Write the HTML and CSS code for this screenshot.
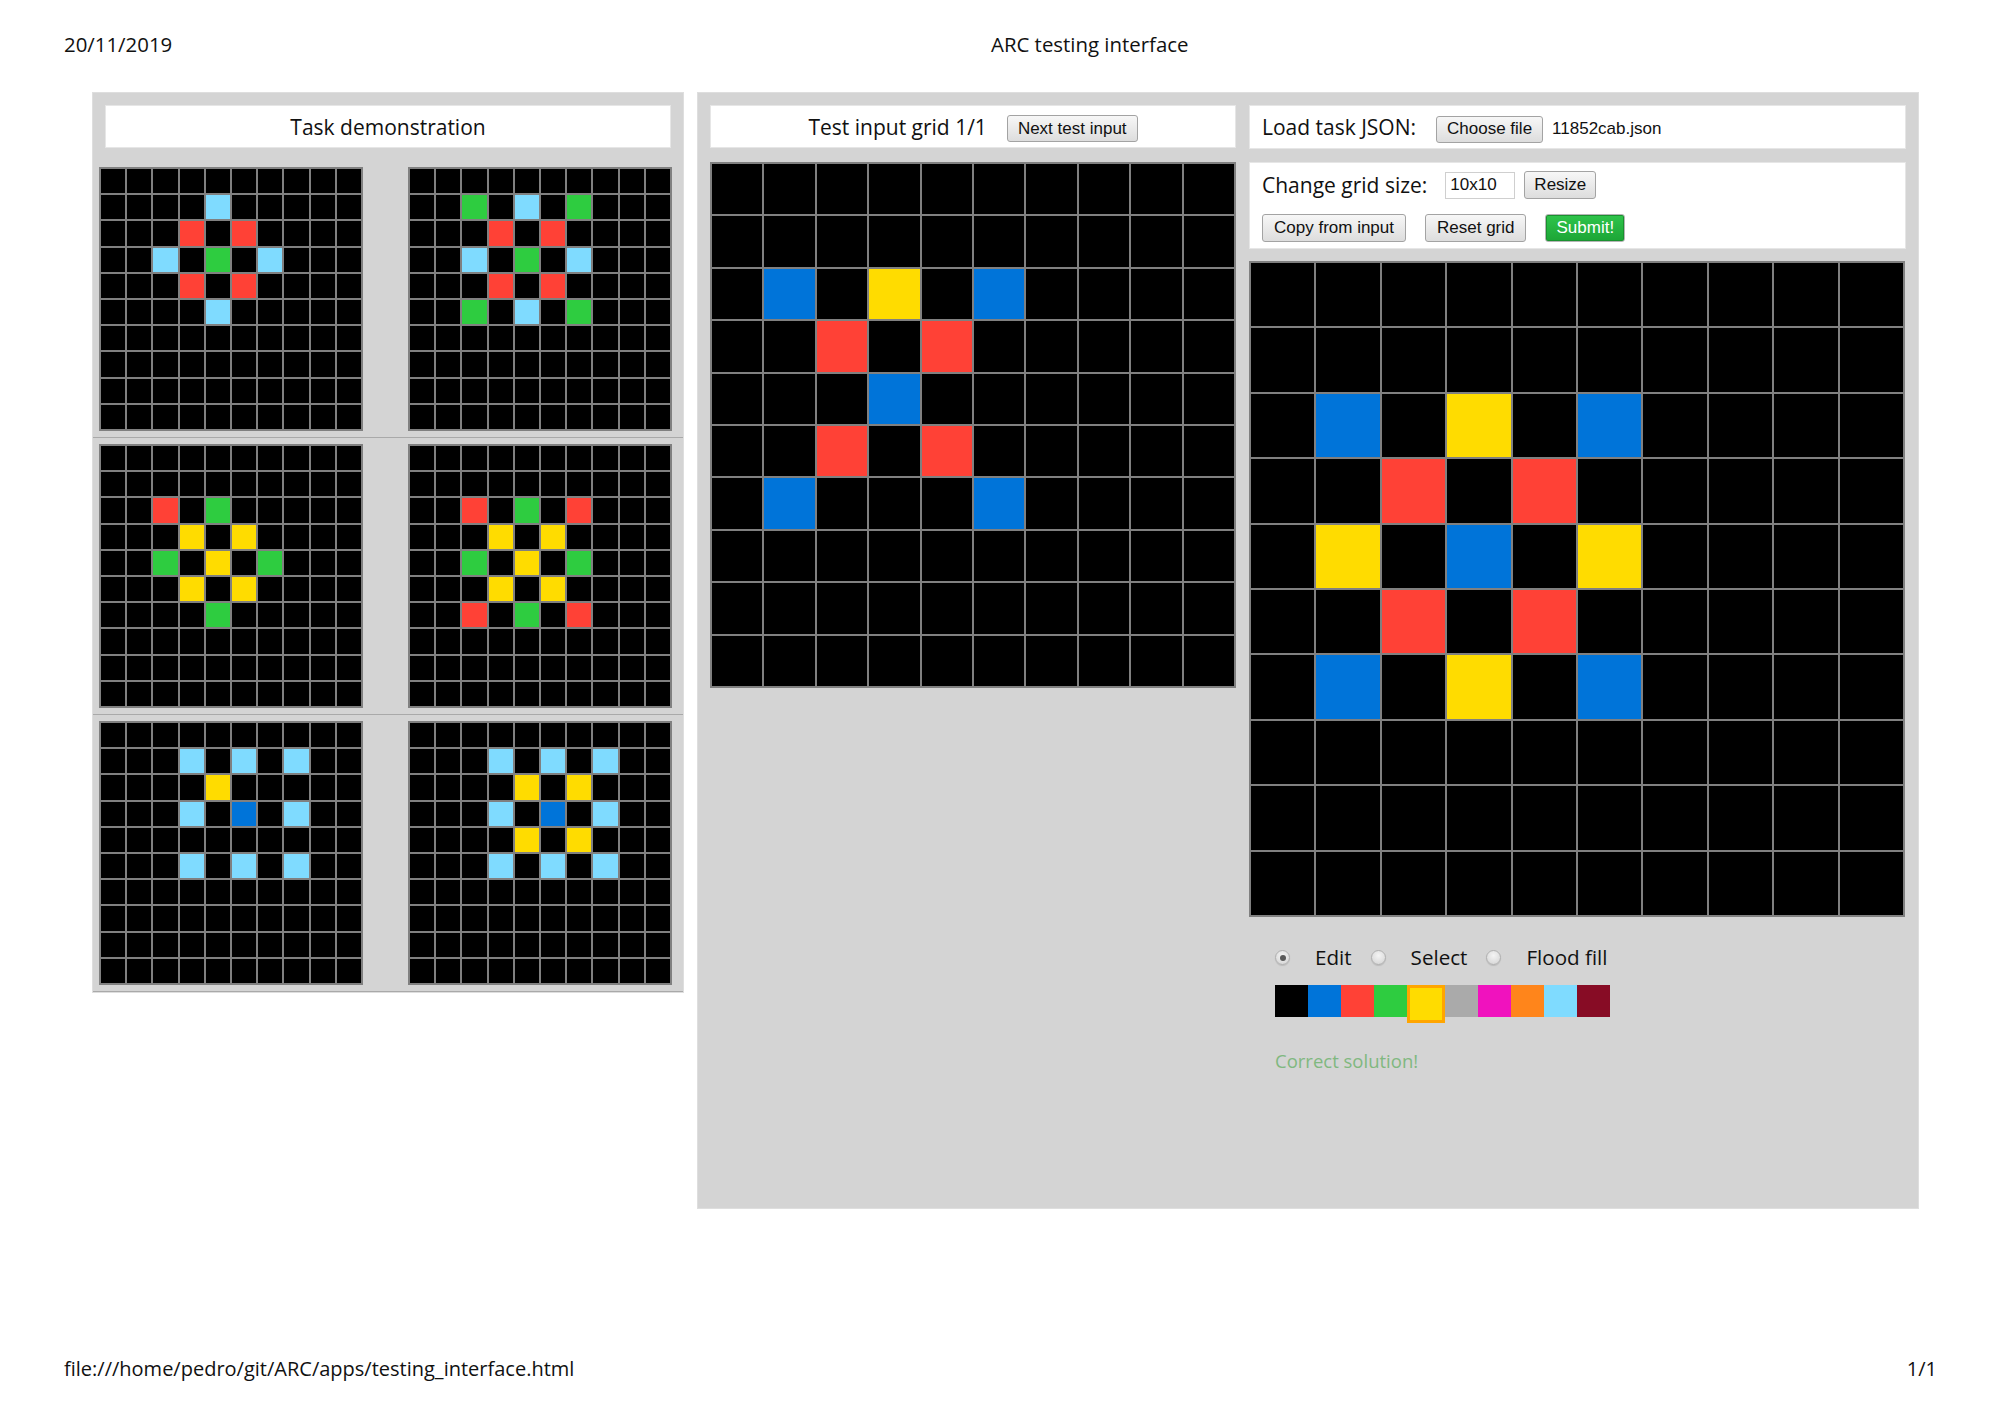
FILE: index.html
```html
<!DOCTYPE html>
<html lang="en">
<head>
<meta charset="utf-8">
<title>ARC testing interface</title>
<link rel="stylesheet" href="styles.css">
</head>
<body>
<div class="page">
  <header class="print-head">
    <span class="date">20/11/2019</span>
    <span class="doc-title">ARC testing interface</span>
  </header>

  <main class="workspace">
    <section class="demo-panel">
      <div class="box demo-title">Task demonstration</div>
      <div class="pair first">
        <div class="grid small" data-grid="p1i"></div>
        <div class="grid small" data-grid="p1o"></div>
      </div>
      <div class="pair">
        <div class="grid small" data-grid="p2i"></div>
        <div class="grid small" data-grid="p2o"></div>
      </div>
      <div class="pair">
        <div class="grid small" data-grid="p3i"></div>
        <div class="grid small" data-grid="p3o"></div>
      </div>
    </section>

    <section class="eval-panel">
      <div class="test-col">
        <div class="box test-head">
          <span class="label">Test input grid 1/1</span>
          <button class="btn next-btn">Next test input</button>
        </div>
        <div class="grid large" data-grid="ti"></div>
      </div>

      <div class="out-col">
        <div class="box load-box">
          <span class="label">Load task JSON:</span>
          <button class="btn choose-btn">Choose file</button>
          <span class="fname">11852cab.json</span>
        </div>
        <div class="box tools-box">
          <div class="tools-row">
            <span class="label">Change grid size:</span>
            <input class="size-input" type="text" value="10x10">
            <button class="btn resize-btn">Resize</button>
          </div>
          <div class="tools-row buttons">
            <button class="btn">Copy from input</button>
            <button class="btn">Reset grid</button>
            <button class="btn submit">Submit!</button>
          </div>
        </div>
        <div class="grid xl" data-grid="to"></div>

        <div class="modes">
          <span class="radio checked"></span><span class="mode-label">Edit</span>
          <span class="radio"></span><span class="mode-label">Select</span>
          <span class="radio"></span><span class="mode-label">Flood fill</span>
        </div>

        <div class="palette">
          <span class="swatch c0"></span>
          <span class="swatch c1"></span>
          <span class="swatch c2"></span>
          <span class="swatch c3"></span>
          <span class="swatch c4 selected"></span>
          <span class="swatch c5"></span>
          <span class="swatch c6"></span>
          <span class="swatch c7"></span>
          <span class="swatch c8"></span>
          <span class="swatch c9"></span>
        </div>

        <div class="info">Correct solution!</div>
      </div>
    </section>
  </main>

  <footer class="print-foot">
    <span>file:///home/pedro/git/ARC/apps/testing_interface.html</span>
    <span>1/1</span>
  </footer>
</div>
<script src="script.js"></script>
</body>
</html>
```

FILE: styles.css
```css
html, body {
  margin: 0;
  padding: 0;
  background: #ffffff;
}

.page {
  width: 2000px;
  height: 1415px;
  display: flex;
  flex-direction: column;
  font-family: "Open Sans", "Noto Sans", sans-serif;
  color: #111;
}

/* print header / footer */
.print-head {
  height: 92px;
  box-sizing: border-box;
  padding: 31px 0 0 64px;
  display: flex;
  font-size: 20.4px;
  line-height: 27px;
}
.print-head .date {
  width: 927px;
}

.print-foot {
  margin-top: auto;
  height: 60px;
  box-sizing: border-box;
  padding: 0 63px 0 64px;
  display: flex;
  justify-content: space-between;
  font-size: 20px;
  line-height: 27px;
}

/* workspace */
.workspace {
  display: flex;
  align-items: flex-start;
  gap: 13px;
  padding-left: 92px;
}

.box {
  background: #ffffff;
  border: 1px solid #e6e6e6;
  box-sizing: border-box;
}

.label {
  font-size: 21px;
  color: #111;
}

/* left demo panel */
.demo-panel {
  width: 592px;
  box-sizing: border-box;
  background: #d4d4d4;
  border: 1px solid #dedede;
}

.demo-title {
  margin: 12px 12px 13px 12px;
  height: 43px;
  display: flex;
  align-items: center;
  justify-content: center;
  font-size: 21px;
}

.pair {
  display: flex;
  gap: 45px;
  padding: 6px 0 6px 6px;
  border-bottom: 1px solid #a9a9a9;
}

/* grids */
.grid {
  display: grid;
  grid-template-columns: repeat(10, 1fr);
  grid-template-rows: repeat(10, 1fr);
  box-sizing: border-box;
  background: #808080;
}
.grid.small {
  width: 264px;
  height: 264px;
  gap: 2px;
  padding: 2px;
}
.grid.large {
  width: 526px;
  height: 526px;
  gap: 2px;
  padding: 2px;
  margin-top: 14px;
}
.grid.xl {
  width: 656px;
  height: 656px;
  gap: 2px;
  padding: 2px;
  margin-top: 12px;
}

.c0 { background: #000000; }
.c1 { background: #0074D9; }
.c2 { background: #FF4136; }
.c3 { background: #2ECC40; }
.c4 { background: #FFDC00; }
.c5 { background: #AAAAAA; }
.c6 { background: #F012BE; }
.c7 { background: #FF851B; }
.c8 { background: #7FDBFF; }
.c9 { background: #870C25; }

/* right evaluation panel */
.eval-panel {
  width: 1222px;
  height: 1117px;
  box-sizing: border-box;
  background: #d4d4d4;
  border: 1px solid #dedede;
  padding: 12px;
  display: flex;
  align-items: flex-start;
  gap: 13px;
}

.test-col {
  width: 526px;
  display: flex;
  flex-direction: column;
}

.test-head {
  height: 43px;
  display: flex;
  align-items: center;
  justify-content: center;
  gap: 20px;
}

.out-col {
  width: 657px;
  display: flex;
  flex-direction: column;
}

.btn {
  font-family: "Liberation Sans", Arial, sans-serif;
  font-size: 17px;
  height: 28px;
  padding: 0 10px;
  border: 1px solid #a3a3a3;
  border-radius: 3px;
  background: linear-gradient(#f7f7f7, #dddddd);
  color: #111;
  box-sizing: border-box;
  margin: 0;
}
.next-btn, .choose-btn {
  height: 27px;
  margin-top: 4px;
}

.load-box {
  height: 44px;
  display: flex;
  align-items: center;
  padding-left: 12px;
}
.load-box .choose-btn {
  margin-left: 20px;
}
.fname {
  margin-left: 9px;
  margin-top: 4px;
  font-family: "Liberation Sans", Arial, sans-serif;
  font-size: 17px;
}

.tools-box {
  margin-top: 13px;
  height: 87px;
  padding: 8px 0 0 12px;
  display: flex;
  flex-direction: column;
  gap: 15px;
}
.tools-row {
  display: flex;
  align-items: center;
  height: 28px;
}
.size-input {
  margin-left: 18px;
  width: 70px;
  height: 27px;
  box-sizing: border-box;
  border: 1px solid #cfcfcf;
  padding: 0 4px;
  font-family: "Liberation Sans", Arial, sans-serif;
  font-size: 17px;
  color: #111;
}
.btn.resize-btn {
  margin-left: 9px;
  padding: 0 9px;
}
.tools-row.buttons {
  gap: 19px;
}
.tools-row.buttons .btn {
  padding: 0 11px;
}
.tools-row.buttons .btn.submit {
  padding: 0 10px;
}
.btn.submit {
  background: linear-gradient(#2fc44b, #1ca536);
  color: #ffffff;
  border: 1px solid #b5b5b5;
  box-shadow: inset 0 0 0 1px #1a9030;
}

/* modes */
.modes {
  margin-top: 26px;
  height: 29px;
  display: flex;
  align-items: center;
  padding-left: 26px;
}
.radio {
  width: 15px;
  height: 15px;
  box-sizing: border-box;
  border-radius: 50%;
  border: 1px solid #b0b0b0;
  background: radial-gradient(circle at 50% 35%, #f4f4f4, #d2d2d2);
  box-shadow: 0 1px 1px rgba(0,0,0,0.12);
  position: relative;
  margin-right: 25px;
}
.radio.checked::after {
  content: "";
  position: absolute;
  left: 3.5px;
  top: 3.5px;
  width: 6px;
  height: 6px;
  border-radius: 50%;
  background: #5a5a5a;
}
.mode-label {
  font-size: 20.6px;
  margin-right: 19px;
  line-height: 29px;
}

/* palette */
.palette {
  margin-top: 13px;
  padding-left: 26px;
  display: flex;
  align-items: flex-start;
}
.swatch {
  width: 33px;
  height: 32px;
  box-sizing: border-box;
}
.swatch.selected {
  width: 38px;
  height: 38px;
  border: 3px solid #FFA500;
}

.info {
  margin-top: 24px;
  padding-left: 26px;
  font-size: 18.5px;
  line-height: 27px;
  color: #80b880;
}
```

FILE: script.js
```js
var Z = "0000000000";
var GRIDS = {
  p1i: [Z, "0000800000", "0002020000", "0080308000", "0002020000", "0000800000", Z, Z, Z, Z],
  p1o: [Z, "0030803000", "0002020000", "0080308000", "0002020000", "0030803000", Z, Z, Z, Z],
  p2i: [Z, Z, "0020300000", "0004040000", "0030403000", "0004040000", "0000300000", Z, Z, Z],
  p2o: [Z, Z, "0020302000", "0004040000", "0030403000", "0004040000", "0020302000", Z, Z, Z],
  p3i: [Z, "0008080800", "0000400000", "0008010800", Z, "0008080800", Z, Z, Z, Z],
  p3o: [Z, "0008080800", "0000404000", "0008010800", "0000404000", "0008080800", Z, Z, Z, Z],
  ti:  [Z, Z, "0104010000", "0020200000", "0001000000", "0020200000", "0100010000", Z, Z, Z],
  to:  [Z, Z, "0104010000", "0020200000", "0401040000", "0020200000", "0104010000", Z, Z, Z]
};
document.querySelectorAll("[data-grid]").forEach(function (el) {
  var rows = GRIDS[el.getAttribute("data-grid")];
  rows.forEach(function (r) {
    for (var i = 0; i < r.length; i++) {
      var c = document.createElement("div");
      c.className = "cell c" + r[i];
      el.appendChild(c);
    }
  });
});
```
